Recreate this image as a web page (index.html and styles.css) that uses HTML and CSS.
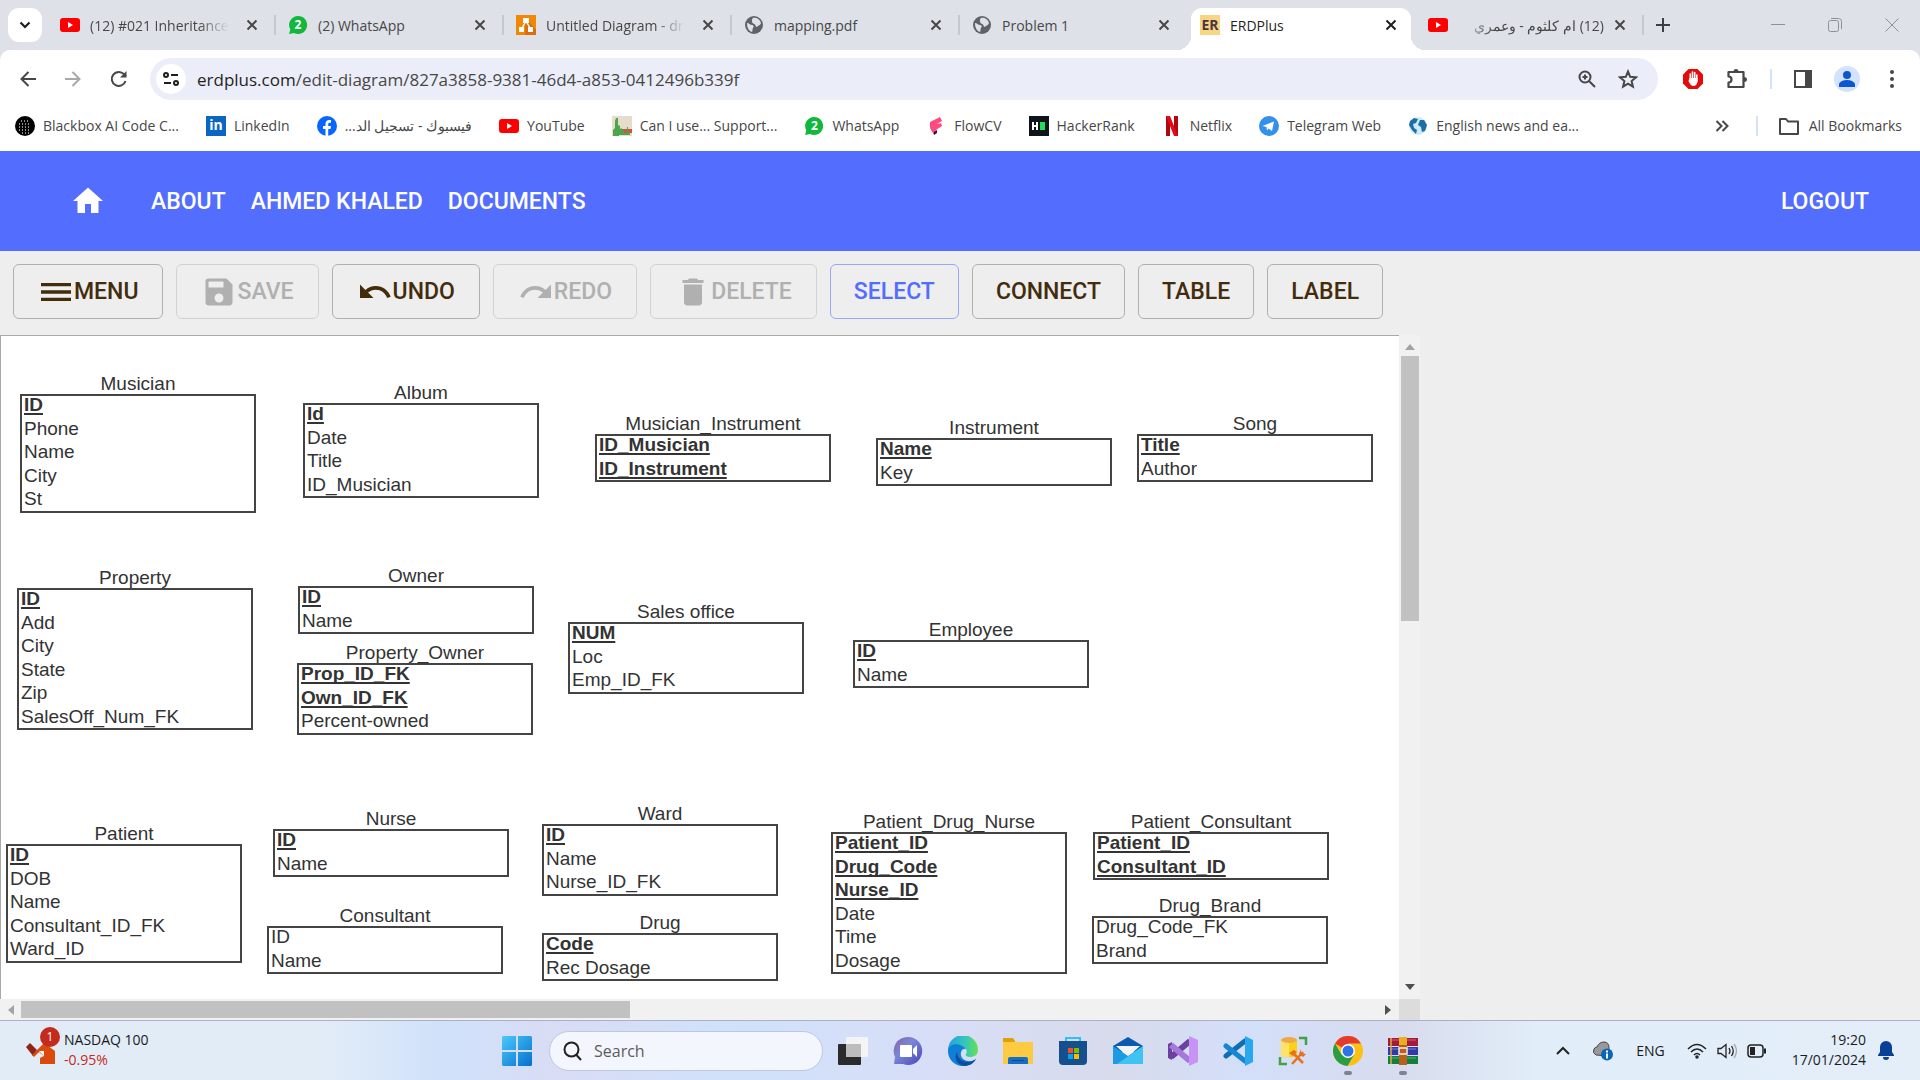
FILE: index.html
```html
<!DOCTYPE html>
<html lang="en">
<head>
<meta charset="utf-8">
<title>ERDPlus</title>
<link rel="stylesheet" href="styles.css">
</head>
<body>
<svg class="defs" aria-hidden="true">
  <defs>
    <symbol id="x" viewBox="0 0 12 12"><path d="M1.500 1.500l9 9M10.500 1.500l-9 9" stroke="currentColor" stroke-width="2" fill="none"/></symbol>
    <symbol id="yt" viewBox="0 0 20 14"><rect width="20" height="14" rx="3" fill="#f00"/><path d="M8 4l5 3-5 3z" fill="#fff"/></symbol>
    <symbol id="wa" viewBox="0 0 20 20"><path d="M10 1a9 9 0 1 1-4 17l-5 1 1.300-4.500A9 9 0 0 1 10 1z" fill="#12b83e"/></symbol>
    <symbol id="globe" viewBox="0 0 20 20"><circle cx="10" cy="10" r="9" fill="#5f6368"/><path d="M3 8c2 0 3 2 5 2s2 2 1 3 0 3-1 4C5 16 3 13 3 8zM9 3c3-1 7 1 8 5-1 3-3 2-4 4-2 0-1-3-3-3-2-1-3-4-1-6z" fill="#dee1e8"/></symbol>
  </defs>
</svg>

<header class="browser">
  <div class="tabstrip">
    <button class="tab-search" aria-label="Search tabs"><svg width="12" height="8" viewBox="0 0 12 8"><path d="M1.500 1.500L6 6l4.500-4.500" fill="none" stroke="#1f1f1f" stroke-width="2.200"/></svg></button>
    <div class="tabs">
      <div class="tab"><svg class="fav"><use href="#yt"/></svg><span class="tab-title fade">(12) #021 Inheritance</span><button class="tab-x" aria-label="Close tab"><svg width="12" height="12"><use href="#x"/></svg></button></div>
      <div class="tab"><span class="fav wa"><svg width="20" height="20"><use href="#wa"/></svg><b>2</b></span><span class="tab-title">(2) WhatsApp</span><button class="tab-x" aria-label="Close tab"><svg width="12" height="12"><use href="#x"/></svg></button></div>
      <div class="tab"><svg class="fav" viewBox="0 0 20 20"><rect width="20" height="20" fill="#f08705"/><path d="M10 3l10 12v5H9z" fill="#df6c0c"/><path d="M10 6l-4.500 8M10 6l4.500 8" stroke="#fff" stroke-width="1.500"/><path d="M7 3h6v5H7zM3 12h5v5H3zM12 12h5v5h-5z" fill="#fff"/></svg><span class="tab-title fade">Untitled Diagram - dr</span><button class="tab-x" aria-label="Close tab"><svg width="12" height="12"><use href="#x"/></svg></button></div>
      <div class="tab"><svg class="fav"><use href="#globe"/></svg><span class="tab-title">mapping.pdf</span><button class="tab-x" aria-label="Close tab"><svg width="12" height="12"><use href="#x"/></svg></button></div>
      <div class="tab no-sep"><svg class="fav"><use href="#globe"/></svg><span class="tab-title">Problem 1</span><button class="tab-x" aria-label="Close tab"><svg width="12" height="12"><use href="#x"/></svg></button></div>
      <div class="tab active"><span class="fav er">ER</span><span class="tab-title">ERDPlus</span><button class="tab-x" aria-label="Close tab"><svg width="12" height="12"><use href="#x"/></svg></button></div>
      <div class="tab"><svg class="fav"><use href="#yt"/></svg><span class="tab-title fade-left" dir="rtl">(12) ام كلثوم - وعمري</span><button class="tab-x" aria-label="Close tab"><svg width="12" height="12"><use href="#x"/></svg></button></div>
    </div>
    <button class="new-tab" aria-label="New tab"><svg width="14" height="14" viewBox="0 0 14 14"><path d="M7 0v14M0 7h14" stroke="#3c4043" stroke-width="2"/></svg></button>
    <div class="window-controls">
      <button aria-label="Minimize"><svg width="14" height="14" viewBox="0 0 14 14"><path d="M0 6.500h14" stroke="#8d9095"/></svg></button>
      <button aria-label="Restore"><svg width="14" height="14" viewBox="0 0 14 14" fill="none" stroke="#8d9095"><rect x=".5" y="2.500" width="10" height="11" rx="2"/><path d="M3 .5h7.500q3 0 3 3V11"/></svg></button>
      <button aria-label="Close"><svg width="14" height="14" viewBox="0 0 14 14"><path d="M.5.5l13 13M13.500.5l-13 13" stroke="#8d9095"/></svg></button>
    </div>
  </div>

  <div class="navbar">
    <div class="nav-buttons">
      <button aria-label="Back"><svg width="16" height="16" viewBox="0 0 16 16"><path d="M16 8H2M8.500 1L1.500 8l7 7" fill="none" stroke="#474747" stroke-width="2"/></svg></button>
      <button aria-label="Forward"><svg width="16" height="16" viewBox="0 0 16 16"><path d="M0 8h14M7.500 1l7 7-7 7" fill="none" stroke="#a8a8a8" stroke-width="2"/></svg></button>
      <button aria-label="Reload"><svg width="18" height="18" viewBox="0 0 18 18"><path d="M15.500 11A7 7 0 1 1 14 4.200L16 6" fill="none" stroke="#474747" stroke-width="2"/><path d="M16.500 1v6.500H10z" fill="#474747"/></svg></button>
    </div>
    <div class="omnibox">
      <button class="site-info" aria-label="Site information"><svg width="16" height="14" viewBox="0 0 16 14" fill="none" stroke="#1f1f1f" stroke-width="2"><circle cx="3" cy="3" r="2"/><path d="M8 3h7M1 11h7"/><circle cx="13" cy="11" r="2"/></svg></button>
      <div class="url" role="textbox" aria-label="Address"><span class="host">erdplus.com</span>/edit-diagram/827a3858-9381-46d4-a853-0412496b339f</div>
      <button aria-label="Zoom"><svg width="18" height="18" viewBox="0 0 18 18" fill="none" stroke="#474747" stroke-width="2"><circle cx="7" cy="7" r="5.500"/><path d="M11 11l6 6M7 4.500v5M4.500 7h5"/></svg></button>
      <button aria-label="Bookmark"><svg width="20" height="20" viewBox="0 0 20 20" fill="none" stroke="#474747" stroke-width="2"><path d="M10 2.500l2.200 5.300 5.800.5-4.400 3.800 1.300 5.600-4.900-3-4.900 3 1.300-5.600L2 8.300l5.800-.5z"/></svg></button>
    </div>
    <div class="extensions">
      <button aria-label="Ad blocker"><svg width="22" height="22" viewBox="0 0 22 22"><path d="M6.500 1h9L21 6.500v9L15.500 21h-9L1 15.500v-9z" fill="#e50b0b"/><path d="M8.300 6v6M10.500 4v8M12.700 4.500V12M14.800 7v6" stroke="#fff" stroke-width="1.600" stroke-linecap="round"/><path d="M7.500 10h8v4q-1 4-4 4-3 0-5-5z" fill="#fff"/></svg></button>
      <button aria-label="Extensions"><svg width="22" height="22" viewBox="0 0 22 22"><path d="M2.500 4h15v15h-15v-4.500c4 0 4-6 0-6z" fill="none" stroke="#474747" stroke-width="2.200" stroke-linejoin="round"/><path d="M7.500 4a2.500 3 0 0 1 5 0zM18 9a3 2.500 0 0 1 0 5z" fill="#474747"/></svg></button>
      <i class="vline"></i>
      <button aria-label="Side panel"><svg width="18" height="18" viewBox="0 0 18 18"><path d="M1 1h16v16H1z" fill="none" stroke="#474747" stroke-width="2"/><path d="M11 1h6v16h-6z" fill="#474747"/></svg></button>
      <button class="avatar" aria-label="Profile"><svg width="16" height="16" viewBox="0 0 16 16" fill="#0b57d0"><circle cx="8" cy="4" r="4"/><path d="M0 16v-3q2-4 8-4t8 4v3z"/></svg></button>
      <button class="kebab" aria-label="Chrome menu"><svg width="4" height="18" viewBox="0 0 4 18" fill="#474747"><circle cx="2" cy="2" r="2"/><circle cx="2" cy="9" r="2"/><circle cx="2" cy="16" r="2"/></svg></button>
    </div>
  </div>

  <nav class="bookmarks" aria-label="Bookmarks">
    <a href="#"><svg viewBox="0 0 20 20"><circle cx="10" cy="10" r="10" fill="#000"/><path d="M6 5h9M4 8h12M4 11h12M4 14h12M7 17h7" stroke="#bbb" stroke-width="1.300" stroke-dasharray="1 2"/></svg>Blackbox AI Code C...</a>
    <a href="#"><span class="fav li">in</span>LinkedIn</a>
    <a href="#"><svg viewBox="0 0 20 20"><circle cx="10" cy="10" r="10" fill="#0866ff"/><path d="M8.500 20v-7H6v-3h2.500V8q0-4 4-4H14v2.700h-1.500q-1.300 0-1.300 1.400V10H14l-.5 3h-2.300v7z" fill="#fff"/></svg><span dir="rtl">فيسبوك - تسجيل الد...</span></a>
    <a href="#"><svg><use href="#yt"/></svg>YouTube</a>
    <a href="#"><svg viewBox="0 0 20 20"><path d="M0 0h20v20H0z" fill="#e6dccb"/><path d="M8 13h12v4H8z" fill="#c9583e"/><path d="M1 20v-6l2-2V5l1-3h2v7l2 1v3l2-1v3l2-1v3h3v-6h1v5l2 1v2H7v2z" fill="#4ca64c"/></svg>Can I use... Support...</a>
    <a href="#"><span class="fav wa"><svg width="20" height="20"><use href="#wa"/></svg><b>2</b></span>WhatsApp</a>
    <a href="#"><svg viewBox="0 0 20 20"><path d="M4 6l10-5 2 4-5 3 4-1 1 3-6 4-2 5-4-7z" fill="#fb4b7f"/><path d="M8 16l3-2v3l-3 2z" fill="#2b1050"/></svg>FlowCV</a>
    <a href="#"><svg viewBox="0 0 20 20"><path d="M0 0h20v20H0z" fill="#0e141e"/><path d="M4 6v8M8 6v8M4 10h4" stroke="#fff" stroke-width="2"/><path d="M11 6h5v8h-5z" fill="#1fe05c"/></svg>HackerRank</a>
    <a href="#"><svg viewBox="0 0 20 20"><path d="M4 0h4v20H4zM12 0h4v20h-4z" fill="#b1060f"/><path d="M4 0h4l8 20h-4z" fill="#e50914"/></svg>Netflix</a>
    <a href="#"><svg viewBox="0 0 20 20"><circle cx="10" cy="10" r="10" fill="#3390ec"/><path d="M3.500 10L15 5.500 13 15l-3.500-2.500L8 14.500 7.500 11z" fill="#fff"/></svg>Telegram Web</a>
    <a href="#"><svg viewBox="0 0 20 20"><circle cx="10" cy="10" r="9" fill="#cfe9f5"/><path d="M2 5l4-3 4 1-2 4-3 1 1 4 3 2-1 4-4-4-3-5zM12 4l4 0 3 5-2 6-3 1-1-5-3-2z" fill="#1a6fa8"/></svg>English news and ea...</a>
    <button class="more" aria-label="More bookmarks"><svg width="14" height="12" viewBox="0 0 14 12"><path d="M1.500 1l5 5-5 5M7.500 1l5 5-5 5" fill="none" stroke="#474747" stroke-width="2"/></svg></button>
    <i class="vline"></i>
    <a href="#" class="all"><svg viewBox="0 0 20 20"><path d="M1 3h6l2 2.500h10V18H1z" fill="none" stroke="#474747" stroke-width="2" stroke-linejoin="round"/></svg>All Bookmarks</a>
  </nav>
</header>

<main class="app">
  <nav class="app-nav" aria-label="Main">
    <a href="#" class="home" aria-label="Home"><svg width="36" height="36" viewBox="0 0 24 24"><path d="M10 20v-6h4v6h5v-8h3L12 3 2 12h3v8z" fill="#fff"/></svg></a>
    <a href="#">ABOUT</a>
    <a href="#">AHMED KHALED</a>
    <a href="#">DOCUMENTS</a>
    <a href="#" class="logout">LOGOUT</a>
  </nav>

  <div class="tools" role="toolbar" aria-label="Diagram tools">
    <button class="tool with-icon"><svg viewBox="0 0 24 24"><path d="M2 18h20v-2.200H2zM2 13.100h20v-2.200H2zM2 6v2.200h20V6z"/></svg>MENU</button>
    <button class="tool with-icon" disabled><svg viewBox="0 0 24 24"><path d="M17 3H5a2 2 0 0 0-2 2v14c0 1.100.9 2 2 2h14c1.100 0 2-.9 2-2V7l-4-4zm-5 16c-1.700 0-3-1.300-3-3s1.300-3 3-3 3 1.300 3 3-1.300 3-3 3zm3-10H5V5h10v4z"/></svg>SAVE</button>
    <button class="tool with-icon"><svg viewBox="0 0 24 24"><path d="M12.500 8c-2.650 0-5.050.99-6.900 2.600L2 7v9h9l-3.620-3.620c1.390-1.160 3.160-1.880 5.120-1.880 3.540 0 6.550 2.310 7.600 5.500l2.370-.78C21.080 11.030 17.150 8 12.500 8z"/></svg>UNDO</button>
    <button class="tool with-icon" disabled><svg viewBox="0 0 24 24"><path d="M18.400 10.600C16.550 8.990 14.150 8 11.500 8c-4.650 0-8.580 3.030-9.960 7.220L3.900 16c1.050-3.190 4.050-5.500 7.600-5.500 1.950 0 3.730.72 5.120 1.880L13 16h9V7l-3.600 3.600z"/></svg>REDO</button>
    <button class="tool with-icon" disabled><svg viewBox="0 0 24 24"><path d="M6 19c0 1.100.9 2 2 2h8c1.100 0 2-.9 2-2V7H6v12zM19 4h-3.500l-1-1h-5l-1 1H5v2h14V4z"/></svg>DELETE</button>
    <button class="tool selected">SELECT</button>
    <button class="tool">CONNECT</button>
    <button class="tool">TABLE</button>
    <button class="tool">LABEL</button>
  </div>

  <div class="viewport">
    <div class="canvas">
      <section class="entity musician"><h2>Musician</h2><ul><li><b>ID</b></li><li>Phone</li><li>Name</li><li>City</li><li>St</li></ul></section>
      <section class="entity album"><h2>Album</h2><ul><li><b>Id</b></li><li>Date</li><li>Title</li><li>ID_Musician</li></ul></section>
      <section class="entity musician-instrument"><h2>Musician_Instrument</h2><ul><li><b>ID_Musician</b></li><li><b>ID_Instrument</b></li></ul></section>
      <section class="entity instrument"><h2>Instrument</h2><ul><li><b>Name</b></li><li>Key</li></ul></section>
      <section class="entity song"><h2>Song</h2><ul><li><b>Title</b></li><li>Author</li></ul></section>
      <section class="entity property"><h2>Property</h2><ul><li><b>ID</b></li><li>Add</li><li>City</li><li>State</li><li>Zip</li><li>SalesOff_Num_FK</li></ul></section>
      <section class="entity owner"><h2>Owner</h2><ul><li><b>ID</b></li><li>Name</li></ul></section>
      <section class="entity property-owner"><h2>Property_Owner</h2><ul><li><b>Prop_ID_FK</b></li><li><b>Own_ID_FK</b></li><li>Percent-owned</li></ul></section>
      <section class="entity sales-office"><h2>Sales office</h2><ul><li><b>NUM</b></li><li>Loc</li><li>Emp_ID_FK</li></ul></section>
      <section class="entity employee"><h2>Employee</h2><ul><li><b>ID</b></li><li>Name</li></ul></section>
      <section class="entity patient"><h2>Patient</h2><ul><li><b>ID</b></li><li>DOB</li><li>Name</li><li>Consultant_ID_FK</li><li>Ward_ID</li></ul></section>
      <section class="entity nurse"><h2>Nurse</h2><ul><li><b>ID</b></li><li>Name</li></ul></section>
      <section class="entity consultant"><h2>Consultant</h2><ul><li>ID</li><li>Name</li></ul></section>
      <section class="entity ward"><h2>Ward</h2><ul><li><b>ID</b></li><li>Name</li><li>Nurse_ID_FK</li></ul></section>
      <section class="entity drug"><h2>Drug</h2><ul><li><b>Code</b></li><li>Rec Dosage</li></ul></section>
      <section class="entity patient-drug-nurse"><h2>Patient_Drug_Nurse</h2><ul><li><b>Patient_ID</b></li><li><b>Drug_Code</b></li><li><b>Nurse_ID</b></li><li>Date</li><li>Time</li><li>Dosage</li></ul></section>
      <section class="entity patient-consultant"><h2>Patient_Consultant</h2><ul><li><b>Patient_ID</b></li><li><b>Consultant_ID</b></li></ul></section>
      <section class="entity drug-brand"><h2>Drug_Brand</h2><ul><li>Drug_Code_FK</li><li>Brand</li></ul></section>
    </div>
    <div class="scroll-y"><svg width="10" height="6" viewBox="0 0 10 6"><path d="M0 6l5-6 5 6z" fill="#a3a3a3"/></svg><i class="thumb"></i><svg width="10" height="6" viewBox="0 0 10 6"><path d="M0 0h10L5 6z" fill="#505050"/></svg></div>
    <div class="scroll-x"><svg width="6" height="10" viewBox="0 0 6 10"><path d="M6 0v10L0 5z" fill="#a3a3a3"/></svg><i class="thumb"></i><svg width="6" height="10" viewBox="0 0 6 10"><path d="M0 0v10l6-5z" fill="#505050"/></svg></div>
    <div class="scroll-corner"></div>
  </div>
</main>

<footer class="taskbar">
  <button class="widget">
    <span class="widget-icon"><svg width="30" height="28" viewBox="0 0 30 28"><path d="M0 10l4-4 7 7-4 6z" fill="#8e2318"/><path d="M6 18l12-12 11 8v13H14v-6l4-2-5-4-5 5z" fill="#d94a0c"/><path d="M13 14l5 5V14z" fill="#fff"/></svg><b class="badge">1</b></span>
    <span class="widget-text"><span>NASDAQ 100</span><span class="down">-0.95%</span></span>
  </button>
  <div class="dock">
    <button class="app-icon start" aria-label="Start"><svg width="30" height="30" viewBox="0 0 30 30"><defs><linearGradient id="win" gradientUnits="userSpaceOnUse" x1="0" y1="0" x2="30" y2="30"><stop stop-color="#4cc9fb"/><stop offset="1" stop-color="#0270cf"/></linearGradient></defs><path d="M1 0h13v14H0V1zM16 0h13l1 1v13H16zM0 16h14v14H1l-1-1zM16 16h14v13l-1 1H16z" fill="url(#win)"/></svg></button>
    <label class="search"><svg width="20" height="20" viewBox="0 0 20 20" fill="none" stroke="#222" stroke-width="2"><circle cx="8.500" cy="8.500" r="7"/><path d="M13 13.500l5 5.500"/></svg><input type="text" placeholder="Search" aria-label="Search"></label>
    <button class="app-icon" aria-label="Task view"><svg viewBox="0 0 30 30"><rect y="8" width="23" height="21" rx="1" fill="#2b2b2b"/><rect x="8" y="1" width="22" height="20" rx="1" fill="#f4f4f4"/><path d="M8 8h15v13H8z" fill="#bdbdbd"/></svg></button>
    <button class="app-icon" aria-label="Chat"><svg viewBox="0 0 30 30"><defs><linearGradient id="chat" x2="1" y2="1"><stop stop-color="#8a5fa8"/><stop offset=".4" stop-color="#7a86d8"/><stop offset="1" stop-color="#4b45b8"/></linearGradient></defs><path d="M15 1a14 14 0 1 1-5 27H1l1-7A14 14 0 0 1 15 1z" fill="url(#chat)"/><rect x="7" y="9" width="12" height="12" rx="1" fill="#fff"/><path d="M20 13l4-4v12l-4-4z" fill="#fff"/></svg></button>
    <button class="app-icon" aria-label="Edge"><svg viewBox="0 0 30 30"><defs><linearGradient id="edge" x2="1"><stop stop-color="#1fa2e4"/><stop offset=".6" stop-color="#35c8b8"/><stop offset="1" stop-color="#6ae04c"/></linearGradient></defs><path d="M0 14A15 15 0 0 1 30 14c0 5-4 7-8 7s-5-2-4-3c2-3 0-6-4-6C8 12 2 10 0 14z" fill="url(#edge)"/><path d="M0 15c0-6 8-9 14-5 2 1 3 2 3 3-4-1-6 6-2 10 4 3 9 3 13 0-3 5-8 7-13 7C6 30 0 23 0 15z" fill="#0f7fd6"/><path d="M9 16c0 6 5 10 11 10 3 0 5-1 8-3-3 5-7 7-12 7-8-1-10-9-7-14z" fill="#0b50a0"/></svg></button>
    <button class="app-icon" aria-label="File Explorer"><svg viewBox="0 0 30 30"><path d="M0 2h10l2 3v3H0z" fill="#e0a106"/><path d="M0 6h30v22H0z" fill="#fdcb41"/><path d="M5 28v-5q0-2 2-2h16q2 0 2 2v5z" fill="#1370c4"/><path d="M9 24.500h12" stroke="#0a4a90"/></svg></button>
    <button class="app-icon" aria-label="Microsoft Store"><svg viewBox="0 0 30 30"><path d="M8 6V2h14v4" fill="none" stroke="#2fc0f5" stroke-width="2"/><path d="M1 5h28v20q0 4-4 4H5q-4 0-4-4z" fill="#154f8e"/><path d="M10 12h5v5h-5z" fill="#f25022"/><path d="M16 12h5v5h-5z" fill="#7fba00"/><path d="M10 18h5v5h-5z" fill="#00a4ef"/><path d="M16 18h5v5h-5z" fill="#ffb900"/></svg></button>
    <button class="app-icon" aria-label="Mail"><svg viewBox="0 0 30 30"><path d="M0 10l15-9 15 9v6H0z" fill="#0a5ab0"/><path d="M3 10h24L15 21z" fill="#f3f3f3"/><path d="M0 10l15 10L30 10v18H0z" fill="#1c9be4"/><path d="M30 10L4 28h26z" fill="#3fc3f3"/></svg></button>
    <button class="app-icon" aria-label="Visual Studio"><svg viewBox="0 0 30 30"><path d="M0 8l4-2v18l-4-2z" fill="#6a429c"/><path d="M3 21L22 5" stroke="#6a429c" stroke-width="6"/><path d="M3 9l19 16" stroke="#a877dc" stroke-width="6"/><path d="M21 0l9 4v22l-9 4z" fill="#c793f5"/></svg></button>
    <button class="app-icon" aria-label="Visual Studio Code"><svg viewBox="0 0 30 30" stroke-linecap="round"><path d="M3 20L22 5" stroke="#0f6db3" stroke-width="5"/><path d="M3 10l19 15" stroke="#1785cf" stroke-width="5"/><path d="M22 0l8 4v22l-8 4z" fill="#28a8ee"/></svg></button>
    <button class="app-icon" aria-label="SQL Server Management Studio"><svg viewBox="0 0 30 30"><path d="M3 4v15c0 3 16 3 16 0V4z" fill="#fdd116"/><path d="M3 4v15c0 1 3 2 8 2V4z" fill="#fde468"/><ellipse cx="11" cy="4" rx="8" ry="3" fill="#f0a848"/><path d="M21 2h7v7M2 21v7h7" fill="none" stroke="#43a047" stroke-width="2.500"/><path d="M14 16l11 11M25 16L14 28" stroke="#e8711c" stroke-width="2.500"/><path d="M11 17l5-3 3 2-4 4zM23 13v4l5 1-3 3-4-3z" fill="#e8711c"/></svg></button>
    <button class="app-icon running" aria-label="Chrome"><svg viewBox="0 0 30 30"><circle cx="15" cy="15" r="15" fill="#fbc116"/><path d="M15 15L2 7.500A15 15 0 0 1 28 7.500H15z" fill="#e33b2e"/><path d="M2 7.500A15 15 0 0 0 14.500 30L21 19 15 15 8.500 18.500z" fill="#2a9c47"/><circle cx="15" cy="15" r="7" fill="#fff"/><circle cx="15" cy="15" r="5.500" fill="#2f73e8"/></svg></button>
    <button class="app-icon running" aria-label="WinRAR"><svg viewBox="0 0 30 30"><path d="M0 2h30v8H0z" fill="#a81838"/><path d="M0 11h30v8H0z" fill="#3438a8"/><path d="M0 20h30v8H0z" fill="#10803c"/><path d="M2 4h26M2 13h26M2 22h26" stroke="#fff" stroke-opacity=".35"/><path d="M3 2v26" stroke="#d8b040" stroke-width="1.500"/><path d="M11 1h8v28h-8z" fill="#b8601c"/><path d="M11 1h8v8h-8z" fill="#e8b020"/><rect x="11" y="12" width="8" height="6" fill="none" stroke="#eee" stroke-width="1.500"/></svg></button>
  </div>
  <div class="tray">
    <button aria-label="Show hidden icons"><svg width="14" height="9" viewBox="0 0 14 9"><path d="M1 8l6-6 6 6" fill="none" stroke="#222" stroke-width="2"/></svg></button>
    <button class="onedrive" aria-label="OneDrive"><svg width="22" height="20" viewBox="0 0 22 20"><path d="M4 14q-4-2-2-6 1-2 3-2 2-5 7-5t5 6v8z" fill="#999" stroke="#444"/><circle cx="15" cy="13.500" r="6" fill="#0a64b8"/><path d="M15 9.500v2M15 12.500v5" stroke="#fff" stroke-width="2"/></svg></button>
    <button class="lang">ENG</button>
    <button class="status" aria-label="Network, volume and battery">
      <svg width="20" height="16" viewBox="0 0 20 16" fill="none" stroke="#222" stroke-width="1.500"><path d="M1 6q9-9 18 0M4 9q6-6 12 0M7 12q3-3 6 0"/><circle cx="10" cy="14" r="1"/></svg>
      <svg width="20" height="16" viewBox="0 0 20 16" fill="none" stroke="#222" stroke-width="1.300"><path d="M1 5.500h3l5-4v13l-5-4H1zM12 5q2 3 0 6M14.500 3q3.500 5 0 10"/><path d="M17 1q5 7 0 14" stroke="#aaa"/></svg>
      <svg width="20" height="14" viewBox="0 0 20 14"><rect x="1" y="1" width="15" height="12" rx="3" fill="none" stroke="#222" stroke-width="1.500"/><path d="M3 3h5v8H3zM17 4.500h2v5h-2z" fill="#222"/></svg>
    </button>
    <button class="clock"><span>19:20</span><span>17/01/2024</span></button>
    <button aria-label="Notifications"><svg width="16" height="19" viewBox="0 0 16 19" fill="#0a3f96"><path d="M8 0a6 6 0 0 1 6 6v5l2 3v1H0v-1l2-3V6a6 6 0 0 1 6-6zM5 16h6a3 3 0 0 1-6 0z"/></svg></button>
  </div>
</footer>
</body>
</html>
```
FILE: styles.css
```css
* { box-sizing: border-box; }

body {
  margin: 0;
  height: 100vh;
  display: flex;
  flex-direction: column;
  overflow: hidden;
  background: #eee;
  font-family: "Open Sans", "Noto Sans", sans-serif;
  font-size: 14px;
  color: #474747;
}

button {
  border: 0;
  padding: 0;
  background: none;
  font: inherit;
  color: inherit;
  display: flex;
  align-items: center;
  justify-content: center;
}

a { color: inherit; text-decoration: none; }
.defs { position: absolute; width: 0; height: 0; }

/* Browser tabs */
.browser { background: #dee1e8; }
.tabstrip {
  height: 50px;
  display: flex;
  align-items: center;
}
.tab-search {
  width: 34px;
  height: 34px;
  margin: 0 6px 0 8px;
  border-radius: 11px;
  background: #fff;
}
.tabs { display: flex; align-self: stretch; min-width: 0; }
.tab {
  width: 228px;
  min-width: 0;
  padding: 0 18px 0 12px;
  display: flex;
  align-items: center;
  gap: 10px;
  position: relative;
}
.tab::after {
  content: "";
  position: absolute;
  right: 0;
  top: 15px;
  width: 2px;
  height: 20px;
  background: #c6c8cc;
}
.tab.no-sep::after { display: none; }
.tab.active {
  width: 220px;
  margin: 8px 5px 0 3px;
  padding: 0 14px 8px 9px;
  border-radius: 11px 11px 0 0;
  background: #fff;
  color: #1f1f1f;
}
.tab.active::before,
.tab.active::after {
  content: "";
  position: absolute;
  top: auto;
  bottom: 0;
  width: 14px;
  height: 14px;
}
.tab.active::before {
  left: -14px;
  background: radial-gradient(circle at 0 0, transparent 14px, #fff 14px);
}
.tab.active::after {
  right: -14px;
  background: radial-gradient(circle at 100% 0, transparent 14px, #fff 14px);
}
.fav { width: 20px; height: 20px; flex: none; }
.tab-title {
  flex: 1;
  min-width: 0;
  white-space: nowrap;
}
.fade { mask-image: linear-gradient(to right, #000 75%, transparent 95%); }
.fade-left { mask-image: linear-gradient(to left, #000 75%, transparent); }
.tab-x { width: 12px; height: 12px; }
.wa { position: relative; display: block; }
.wa b {
  position: absolute;
  inset: 0;
  color: #fff;
  font-size: 12px;
  line-height: 20px;
  text-align: center;
}
.er {
  background: #f7d583;
  color: #4b3540;
  font-size: 14px;
  font-weight: 700;
  line-height: 20px;
  text-align: center;
}
.new-tab { width: 38px; height: 34px; }
.window-controls { margin-left: auto; display: flex; }
.window-controls button { width: 57px; height: 34px; }

/* Address bar */
.navbar {
  height: 58px;
  padding: 0 18px 0 20px;
  display: flex;
  align-items: center;
  border-radius: 10px 10px 0 0;
  background: #fff;
}
.nav-buttons { display: flex; gap: 29px; width: 130px; }
.omnibox {
  flex: 1;
  height: 42px;
  padding: 0 20px 0 6px;
  display: flex;
  align-items: center;
  gap: 22px;
  border-radius: 21px;
  background: #ebeef8;
}
.site-info { width: 30px; height: 30px; border-radius: 15px; background: #fff; }
.url { flex: 1; margin-left: -11px; font-size: 17px; white-space: nowrap; }
.host { color: #1f1f1f; }
.extensions { margin-left: 24px; display: flex; align-items: center; gap: 22px; }
.vline { width: 2px; height: 20px; background: #d3e3fd; }
.avatar { width: 26px; height: 26px; border-radius: 13px; background: #d3e3fd; }
.kebab { width: 20px; height: 20px; }

/* Bookmarks bar */
.bookmarks {
  height: 43px;
  padding: 0 18px 8px 15px;
  display: flex;
  align-items: center;
  gap: 27px;
  background: #fff;
  white-space: nowrap;
}
.bookmarks a { display: flex; align-items: center; gap: 8px; }
.bookmarks a > svg { width: 20px; height: 20px; }
.li {
  background: #0a66c2;
  color: #fff;
  font-size: 14px;
  font-weight: 700;
  line-height: 18px;
  text-align: center;
}
.more { margin-left: auto; }
.bookmarks .vline { margin-right: -6px; }
.bookmarks .all { gap: 10px; }

/* Application */
.app { flex: 1; min-height: 0; display: flex; flex-direction: column; font-family: Roboto, sans-serif; font-size: 23px; font-weight: 500; }
.app-nav {
  flex: none;
  height: 100px;
  padding: 0 51px 0 70px;
  display: flex;
  align-items: center;
  gap: 25px;
  background: #536dfe;
  color: #fff;
}
.home { height: 36px; margin-right: 20px; }
.logout { margin-left: auto; }

.tools { flex: none; height: 84px; padding: 13px; display: flex; gap: 13px; }
.tool {
  height: 55px;
  padding: 0 23px;
  border: 1px solid #b0b0b0;
  border-radius: 6px;
  color: #432c0c;
}
.tool.with-icon { padding: 0 24px; }
.tool svg { width: 36px; height: 36px; fill: currentColor; }
.tool:disabled { color: #b0b0b0; border-color: #d2d2d2; }
.tool.selected { color: #536dfe; border-color: #98a7f8; }

/* Diagram */
.viewport {
  flex: 1;
  min-height: 0;
  width: 100%;
  max-width: 1420px;
  display: grid;
  grid-template: minmax(0, 1fr) 21px / minmax(0, 1fr) 21px;
}
.canvas {
  position: relative;
  overflow: hidden;
  border: solid #a9a9a9;
  border-width: 1px 0 0 1px;
  background: #fff;
  font-family: "Liberation Sans", Arial, sans-serif;
  font-size: 19px;
  font-weight: 400;
  color: #333;
}
.entity { position: absolute; width: 236px; }
.entity h2 { margin: 0; font-size: 19px; font-weight: 400; line-height: 21px; text-align: center; }
.entity ul {
  margin: 0;
  padding: 0 2px;
  border: 2px solid #444;
  list-style: none;
  line-height: 1.24;
}
.entity li:first-child { margin-top: -3px; }
.entity b {
  text-decoration: underline 2px;
  text-underline-offset: 2px;
  text-decoration-skip-ink: none;
}
.musician { left: 19px; top: 37px; }
.album { left: 302px; top: 46px; }
.musician-instrument { left: 594px; top: 77px; }
.instrument { left: 875px; top: 81px; }
.song { left: 1136px; top: 77px; }
.property { left: 16px; top: 231px; }
.owner { left: 297px; top: 229px; }
.property-owner { left: 296px; top: 306px; }
.sales-office { left: 567px; top: 265px; }
.employee { left: 852px; top: 283px; }
.patient { left: 5px; top: 487px; }
.nurse { left: 272px; top: 472px; }
.consultant { left: 266px; top: 569px; }
.ward { left: 541px; top: 467px; }
.drug { left: 541px; top: 576px; }
.patient-drug-nurse { left: 830px; top: 475px; }
.patient-consultant { left: 1092px; top: 475px; }
.drug-brand { left: 1091px; top: 559px; }

.scroll-y, .scroll-x { display: flex; align-items: center; background: #f1f1f1; }
.scroll-y { flex-direction: column; padding: 9px 0; }
.scroll-x { padding: 0 8px; }
.scroll-y .thumb { width: 18px; height: 41%; margin: 6px 0 auto; background: #c1c1c1; }
.scroll-x .thumb { width: 44%; height: 17px; margin: 0 auto 0 7px; background: #c1c1c1; }
.scroll-corner { background: #dcdcdc; }

/* Taskbar */
.taskbar {
  flex: none;
  height: 60px;
  padding: 0 26px;
  display: grid;
  grid-template-columns: 1fr auto 1fr;
  align-items: center;
  border-top: 1px solid #a9b2c4;
  background: linear-gradient(90deg, #e1ecf7 0 17%, #d0e1fa 23%, #d9dcf5 29%, #d0e1fa 38%, #d7def7 48%, #d8dbec 58%, #d3dff9 65%, #d8dcee 73%, #e1edf8 80%, #e3eef9);
  color: #1b1b1b;
}
.widget { justify-self: start; gap: 8px; text-align: left; }
.widget-icon { position: relative; width: 30px; height: 28px; }
.badge {
  position: absolute;
  top: -10px;
  right: -4px;
  width: 20px;
  height: 20px;
  border-radius: 10px;
  background: #c42b1c;
  color: #fff;
  font-size: 12px;
  font-weight: 400;
  line-height: 20px;
  text-align: center;
}
.widget-text, .clock { display: flex; flex-direction: column; line-height: 20px; padding-bottom: 2px; }
.widget-text .down { color: #c42b1c; }
.dock { display: flex; align-items: center; gap: 25px; }
.app-icon { position: relative; width: 30px; height: 30px; }
.app-icon svg { width: 30px; height: 30px; }
.start { margin-right: -8px; }
.running::after {
  content: "";
  position: absolute;
  bottom: -9px;
  left: 11px;
  width: 8px;
  height: 4px;
  border-radius: 2px;
  background: #7f8390;
}
.search {
  width: 274px;
  height: 40px;
  margin-right: -10px;
  padding: 0 13px;
  display: flex;
  align-items: center;
  gap: 11px;
  border: 1px solid #bcc8e0;
  border-radius: 20px;
  background: #f3f6fd;
}
.search input {
  flex: 1;
  min-width: 0;
  border: 0;
  padding: 0;
  background: none;
  font: inherit;
  font-size: 16px;
}
.search input::placeholder { color: #5c5c5c; opacity: 1; }
.tray { justify-self: end; display: flex; align-items: center; gap: 22px; }
.status { gap: 10px; }
.clock { align-items: flex-end; margin: 0 -10px 0 3px; }
```
